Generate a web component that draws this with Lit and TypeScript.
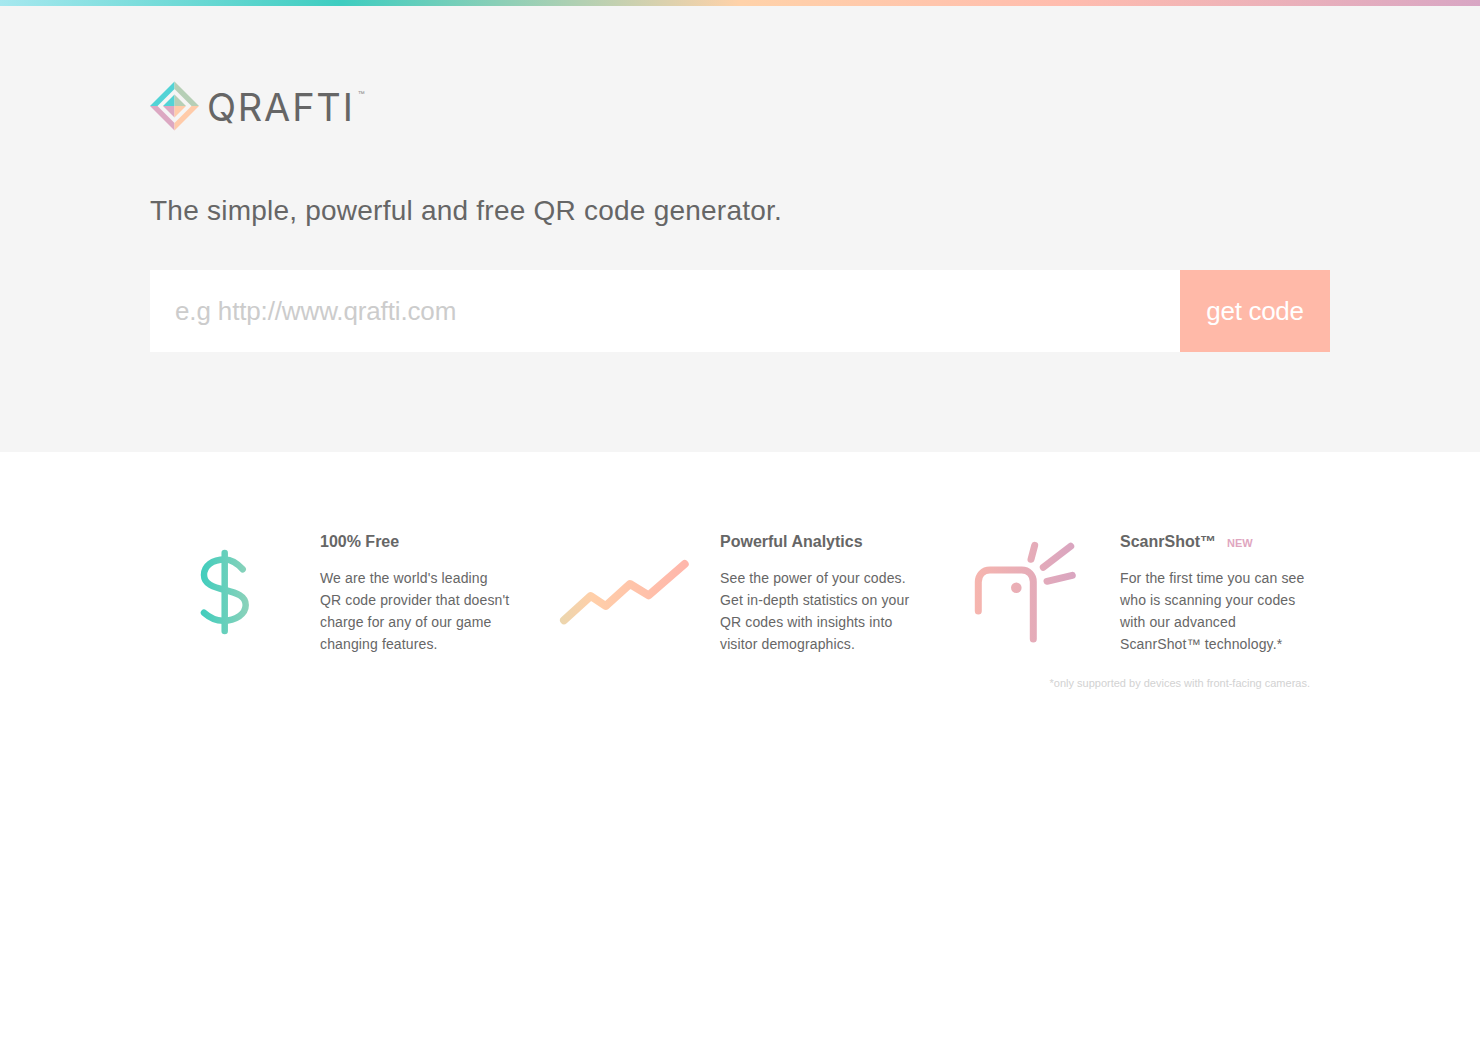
import { LitElement, html, css, svg } from 'lit';
import { customElement } from 'lit/decorators.js';

const dollarIcon = svg`
  <defs>
    <linearGradient id="dollar-grad" gradientUnits="userSpaceOnUse" x1="50" y1="0" x2="100" y2="0">
      <stop offset="0" stop-color="#3fcdbd" />
      <stop offset="1" stop-color="#8ed2ba" />
    </linearGradient>
  </defs>
  <g fill="none" stroke="url(#dollar-grad)" stroke-width="6.5" stroke-linecap="round">
    <path d="M74.7 23V101" />
    <path d="M92.7 39.3C87 33 82 29.5 75 29.5C62 29.5 54 36 54 45C54 54 63 57 75 60C87 63 95.7 66 95.7 75C95.7 84 86 90.7 73 90.7C66 90.7 60 88 54 82.7" />
  </g>
`;

const chartIcon = svg`
  <defs>
    <linearGradient id="chart-grad" gradientUnits="userSpaceOnUse" x1="10" y1="0" x2="140" y2="0">
      <stop offset="0" stop-color="#ebd6ae" />
      <stop offset="0.25" stop-color="#ffcfa9" />
      <stop offset="1" stop-color="#ffb5ab" />
    </linearGradient>
  </defs>
  <path
    d="M14 90.3L40.7 66L55.7 76L80 54L98.7 65.3L134.7 34"
    fill="none"
    stroke="url(#chart-grad)"
    stroke-width="8"
    stroke-linecap="round"
    stroke-linejoin="round"
  />
`;

const cameraIcon = svg`
  <defs>
    <linearGradient id="camera-grad" gradientUnits="userSpaceOnUse" x1="25" y1="0" x2="125" y2="0">
      <stop offset="0" stop-color="#f6b5ae" />
      <stop offset="1" stop-color="#d9a5c0" />
    </linearGradient>
  </defs>
  <g fill="none" stroke="url(#camera-grad)" stroke-width="7" stroke-linecap="round">
    <path d="M28.3 81V52C28.3 45 33 40 40 40H71.7C78.5 40 83.3 45 83.3 51.7V109" />
    <path d="M81 29.3L84.7 15.3" />
    <path d="M93.3 37.3L120.7 16.3" />
    <path d="M97 51.3L122.3 45.3" />
  </g>
  <circle cx="66.3" cy="57.7" r="5.3" fill="url(#camera-grad)" />
`;

const logoMark = html`
  <svg class="mark" width="50" height="50" viewBox="0 0 50 50" aria-hidden="true">
    <polygon points="24.5,0.5 24.5,8 7.5,25 0,25" fill="#52d3d6" />
    <polygon points="24.5,0.5 49,25 41.5,25 24.5,8" fill="#b6cfb6" />
    <polygon points="0,25 7.5,25 24.5,42 24.5,49.5" fill="#dca8c2" />
    <polygon points="49,25 24.5,49.5 24.5,42 41.5,25" fill="#ffcba9" />
    <polygon points="24.5,13.5 24.5,25 13,25" fill="#52d3d6" />
    <polygon points="24.5,13.5 36,25 24.5,25" fill="#b6cfb6" />
    <polygon points="13,25 24.5,25 24.5,36.5" fill="#dca8c2" />
    <polygon points="36,25 24.5,36.5 24.5,25" fill="#ffcba9" />
  </svg>
`;

@customElement('app-root')
export class AppRoot extends LitElement {
  static styles = css`
    :host {
      display: block;
      min-height: 1037px;
      background: #fff;
      font-family: 'Liberation Sans', Arial, sans-serif;
      color: #666;
    }

    .rainbow {
      height: 6px;
      background: linear-gradient(
        to right,
        #a6e8ef 0%,
        #3ecdc0 23%,
        #ffd2a9 50%,
        #ffbcae 72%,
        #d8a6c4 100%
      );
    }

    .hero {
      height: 446px;
      box-sizing: border-box;
      padding: 75px 150px 0;
      background: #f5f5f5;
    }

    .logo {
      display: flex;
      align-items: center;
      height: 50px;
    }

    .mark {
      display: block;
      flex: none;
    }

    .wordmark {
      margin: 1px 0 0 7px;
      font-family: Inter, sans-serif;
      font-size: 38px;
      font-weight: 400;
      line-height: 50px;
      letter-spacing: 1.8px;
      color: #666;
    }

    .tm {
      align-self: flex-start;
      margin: 8px 0 0 3px;
      font-size: 7px;
      line-height: 10px;
      color: #888;
    }

    h1 {
      margin: 63px 0 0;
      font-size: 28px;
      font-weight: 400;
      line-height: 34px;
      letter-spacing: 0.23px;
      color: #666;
    }

    .form {
      display: flex;
      height: 82px;
      margin-top: 42px;
    }

    .form input {
      flex: 1;
      min-width: 0;
      box-sizing: border-box;
      padding: 0 25px;
      border: 0;
      outline: 0;
      background: #fff;
      font: inherit;
      font-size: 26px;
      letter-spacing: -0.14px;
      color: #666;
    }

    .form input::placeholder {
      color: #ccc;
      opacity: 1;
    }

    .form button {
      flex: none;
      width: 150px;
      padding: 0;
      border: 0;
      background: #ffb9a8;
      font: inherit;
      font-size: 26px;
      letter-spacing: -0.3px;
      color: #fff;
    }

    .features {
      display: grid;
      grid-template-columns: repeat(3, 400px);
      padding: 78px 0 0 150px;
    }

    .feature {
      display: grid;
      grid-template-columns: 150px 191px;
      column-gap: 20px;
    }

    .icon {
      display: block;
    }

    .copy {
      padding-top: 1px;
    }

    h2 {
      display: flex;
      align-items: baseline;
      height: 22px;
      margin: 0;
      font-size: 16px;
      font-weight: 700;
      line-height: 22px;
      color: #666;
    }

    .new {
      margin-left: 11px;
      font-size: 11px;
      color: #dfa6bf;
    }

    p {
      margin: 14px 0 0;
      font-size: 14px;
      line-height: 22px;
      letter-spacing: 0.13px;
      color: #666;
    }

    .note {
      margin: 21px 1px 0 -100px;
      font-size: 11px;
      line-height: 14px;
      text-align: right;
      color: #d2d2d2;
    }
  `;

  render() {
    return html`
      <div class="rainbow"></div>
      <header class="hero">
        <div class="logo">
          ${logoMark}
          <span class="wordmark">QRAFTI</span>
          <span class="tm">™</span>
        </div>
        <h1>The simple, powerful and free QR code generator.</h1>
        <form class="form">
          <input type="text" placeholder="e.g http://www.qrafti.com" />
          <button type="button">get code</button>
        </form>
      </header>
      <section class="features">
        <article class="feature">
          <svg class="icon" width="150" height="120" viewBox="0 0 150 120">${dollarIcon}</svg>
          <div class="copy">
            <h2>100% Free</h2>
            <p>We are the world's leading QR code provider that doesn't charge for any of our game changing features.</p>
          </div>
        </article>
        <article class="feature">
          <svg class="icon" width="150" height="120" viewBox="0 0 150 120">${chartIcon}</svg>
          <div class="copy">
            <h2>Powerful Analytics</h2>
            <p>See the power of your codes. Get in-depth statistics on your QR codes with insights into visitor demographics.</p>
          </div>
        </article>
        <article class="feature">
          <svg class="icon" width="150" height="120" viewBox="0 0 150 120">${cameraIcon}</svg>
          <div class="copy">
            <h2>ScanrShot™ <span class="new">NEW</span></h2>
            <p>For the first time you can see who is scanning your codes with our advanced ScanrShot™ technology.*</p>
            <div class="note">*only supported by devices with front-facing cameras.</div>
          </div>
        </article>
      </section>
    `;
  }
}

declare global {
  interface HTMLElementTagNameMap {
    'app-root': AppRoot;
  }
}
